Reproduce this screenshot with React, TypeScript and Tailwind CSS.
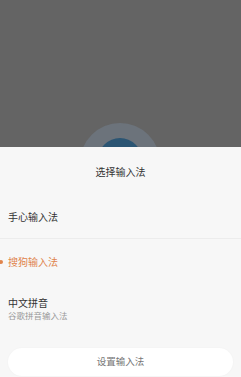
export default function App() {
  return (
    <div className="w-[241px] h-[377px] flex flex-col overflow-hidden bg-[#646464]" style={{ fontFamily: '"Noto Sans CJK SC", "Noto Sans", sans-serif' }}>
      <div className="relative h-[147px] shrink-0 overflow-hidden bg-[#646464]">
        <div className="absolute left-[80px] top-[123px] w-[80px] h-[80px] rounded-full bg-[#6c737b]" />
        <div className="absolute left-[98px] top-[138px] w-[44px] h-[44px] rounded-full bg-[#2b5573]" />
      </div>
      <div className="flex-1 flex flex-col bg-[#f7f7f7]">
        <div className="h-[49px] flex items-center justify-center text-[10px] leading-none text-[#333]">选择输入法</div>
        <div className="h-[43px] flex items-center px-[8px] text-[10px] leading-none text-[#333] border-b border-[#ececec]">手心输入法</div>
        <div className="relative h-[46px] flex items-center px-[8px] text-[10px] leading-none text-[#e0844c]">
          <div className="absolute left-[-1px] top-[21px] w-[4px] h-[4px] rounded-full bg-[#e0844c]" />
          搜狗输入法
        </div>
        <div className="h-[47px] flex flex-col justify-center px-[8px] gap-[3px]">
          <div className="text-[10px] leading-none text-[#333]">中文拼音</div>
          <div className="text-[8.5px] leading-none text-[#999]">谷歌拼音输入法</div>
        </div>
        <div className="px-[8px] pt-[16px]">
          <div className="h-[28px] rounded-full bg-white flex items-center justify-center text-[9.5px] leading-none text-[#777] shadow-[0_0_2px_rgba(0,0,0,0.04)]">设置输入法</div>
        </div>
      </div>
    </div>
  );
}
